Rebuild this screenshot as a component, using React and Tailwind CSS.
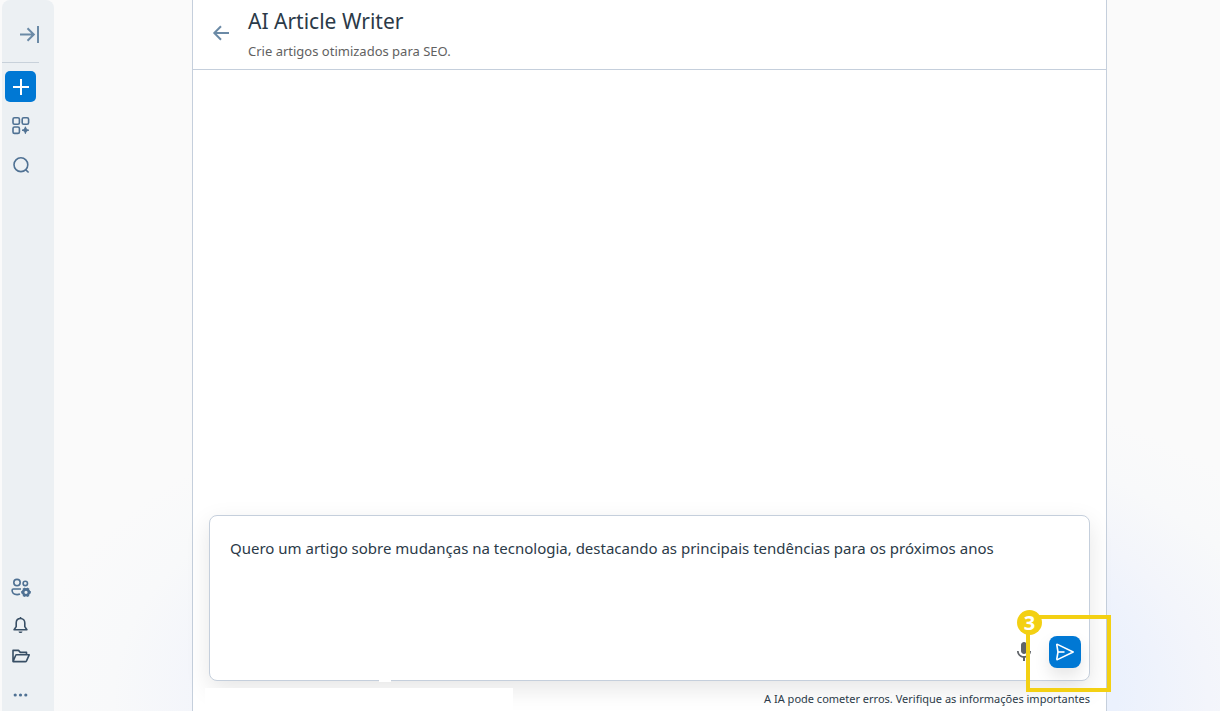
import {MdMic} from 'react-icons/md';

export default function App() {
  return (
    <div className="flex min-h-screen bg-[#fafafa] pl-0.5 font-['Noto_Sans','Open_Sans',sans-serif] text-[#2b3a48]">
      <Sidebar />
      <Backdrop>
        <main className="flex flex-1 flex-col border-x border-[#c5cfdc] bg-white">
          <Header />
          <div className="flex-1" />
          <Composer />
        </main>
      </Backdrop>
    </div>
  );
}

function Backdrop({children}) {
  return (
    <div className="flex flex-1 bg-[radial-gradient(ellipse_660px_330px_at_56%_98%,#e9f0fe_0%,#ebf1fd_62%,#f3f5fb_76%,#f8f9fa_90%,#fafafa_104%)] pl-[138px] pr-[113px]">
      {children}
    </div>
  );
}

function Sidebar() {
  return (
    <nav
      aria-label="Menu"
      className="flex w-[52px] flex-col justify-between rounded-t-lg bg-[#ecf0f3] text-[#4f7193]"
    >
      <div className="flex w-[37px] flex-col items-center">
        <div className="flex h-[63px] w-full items-center justify-end border-b border-[#c8d1da] pt-1.5 text-[#6b8aa6]">
          <button type="button" aria-label="Expandir menu">
            <ExpandIcon />
          </button>
        </div>
        <button
          type="button"
          aria-label="Novo"
          className="mt-2 flex size-[31px] items-center justify-center rounded-[5px] bg-[#0078d4] text-white"
        >
          <PlusIcon />
        </button>
        <button type="button" aria-label="Aplicativos" className="mt-3.5">
          <AppsIcon />
        </button>
        <button type="button" aria-label="Buscar" className="mt-5">
          <SearchIcon />
        </button>
      </div>
      <div className="flex w-[37px] flex-col items-center pb-1.5">
        <button type="button" aria-label="Equipe">
          <TeamIcon />
        </button>
        <button type="button" aria-label="Notificações" className="mt-[18px] text-[#384f65]">
          <BellIcon />
        </button>
        <button type="button" aria-label="Arquivos" className="mt-[15px] text-[#384f65]">
          <FolderIcon />
        </button>
        <button type="button" aria-label="Mais" className="mt-[22px]">
          <DotsIcon />
        </button>
      </div>
    </nav>
  );
}

function Header() {
  return (
    <header className="flex h-[70px] items-start gap-[18px] border-b border-[#c5cfdc] pl-[19px]">
      <a href="#voltar" aria-label="Voltar" className="mt-6 text-[#6b8aa6]">
        <BackIcon />
      </a>
      <div className="pt-[7px]">
        <h1 className="text-[21px] leading-7">AI Article Writer</h1>
        <p className="mt-1.5 text-[13px] leading-5 text-[#616161]">Crie artigos otimizados para SEO.</p>
      </div>
    </header>
  );
}

function Composer() {
  return (
    <form className="px-4">
      <div className="relative flex h-[166px] flex-col rounded-lg border border-[#c5cfdc] bg-white shadow-[0_8px_24px_rgba(0,0,0,0.1)]">
        <textarea
          aria-label="Mensagem"
          className="flex-1 resize-none overflow-hidden px-5 pt-5 text-[15px] leading-6 outline-none"
          defaultValue="Quero um artigo sobre mudanças na tecnologia, destacando as principais tendências para os próximos anos"
        />
        <div className="flex items-center justify-end gap-[13px] pb-3 pr-2">
          <button type="button" aria-label="Ditar" className="text-[#5f6368]">
            <MdMic size={24} />
          </button>
          <div className="relative">
            <button
              type="submit"
              aria-label="Enviar"
              className="flex size-8 items-center justify-center rounded-lg bg-[#0078d4] text-white shadow-[0_8px_16px_rgba(0,0,0,0.1)]"
            >
              <SendIcon />
            </button>
            <StepMarker number={3} />
          </div>
        </div>
        <span className="absolute -bottom-0.5 left-[169px] h-[3px] w-3 bg-white" />
      </div>
      <div className="relative mt-1.5 flex items-stretch justify-between">
        <span className="-ml-1 mt-px w-[308px] bg-white" />
        <p className="pb-0.5 pt-0.5 text-[11px] leading-5">
          A IA pode cometer erros. Verifique as informações importantes
        </p>
      </div>
    </form>
  );
}

function StepMarker({number}) {
  return (
    <div className="pointer-events-none absolute -left-[23px] -top-[21px] z-10 h-[77px] w-[85px] border-4 border-[#f3d013]">
      <span className="absolute -left-[13px] -top-[9px] flex size-[25px] items-center justify-center rounded-full bg-[#f3d013] font-['Open_Sans',sans-serif] text-xl font-bold leading-none text-white">
        {number}
      </span>
    </div>
  );
}

function ExpandIcon() {
  return (
    <svg width="20" height="18" viewBox="0 0 20 18" fill="none" stroke="currentColor" strokeWidth="2">
      <path d="M1 9.5h14M8.5 3.3 14.8 9.5l-6.3 6.2M19 1v17" />
    </svg>
  );
}

function BackIcon() {
  return (
    <svg width="18" height="18" viewBox="0 0 18 18" fill="none" stroke="currentColor" strokeWidth="2">
      <path d="M17 9H2.5M9 2.2 2.3 9 9 15.8" />
    </svg>
  );
}

function PlusIcon() {
  return (
    <svg width="17" height="17" viewBox="0 0 17 17" fill="none" stroke="currentColor" strokeWidth="2">
      <path d="M9 1v16M1 9h16" />
    </svg>
  );
}

function AppsIcon() {
  return (
    <svg width="20" height="19" viewBox="0 0 20 19" fill="none" stroke="currentColor" strokeWidth="1.6">
      <rect x="2" y="1.8" width="6.4" height="6.4" rx="1.5" />
      <rect x="11.2" y="1.8" width="6.4" height="6.4" rx="1.5" />
      <rect x="2" y="11" width="6.4" height="6.4" rx="1.5" />
      <path
        d="M14.4 10.8c.6 2.2 1.2 2.8 3.4 3.4-2.2.6-2.8 1.2-3.4 3.4-.6-2.2-1.2-2.8-3.4-3.4 2.2-.6 2.8-1.2 3.4-3.4z"
        fill="currentColor"
        strokeWidth="1"
      />
    </svg>
  );
}

function SearchIcon() {
  return (
    <svg width="18" height="20" viewBox="0 0 18 20" fill="none" stroke="currentColor" strokeWidth="1.6">
      <circle cx="8.9" cy="9.7" r="6.9" />
      <path d="m13.6 14.7 3 2.8" />
    </svg>
  );
}

function TeamIcon() {
  return (
    <svg width="20" height="20" viewBox="0 0 20 20" fill="none" stroke="currentColor" strokeWidth="1.6">
      <circle cx="6" cy="4.6" r="3.2" />
      <circle cx="14.3" cy="5.4" r="2.2" />
      <path d="M10 11H2.4c-.8 0-1.3.5-1.3 1.3 0 2.6 2.1 4.3 5 4.3 1 0 2-.1 2.9-.5" />
      <circle cx="15" cy="14.3" r="2.9" strokeWidth="2.6" />
      <path
        d="M12.6 10.1l1 1.8M16.400 16.700l1 1.800M17.400 10.100l-1 1.800M13.600 16.700l-1 1.800M10.200 14.300h2M17.800 14.300h2"
        strokeWidth="2.400"
      />
    </svg>
  );
}

function BellIcon() {
  return (
    <svg width="18" height="18" viewBox="0 0 18 18" fill="none" stroke="currentColor" strokeWidth="1.6">
      <path
        d="M8.500 2.500c-2.700 0-4.300 2-4.300 4.500v3.600L2.100 13.800h12.800l-2.100-3.200V7c0-2.500-1.600-4.500-4.300-4.500zM8.500 1v1.500"
        strokeLinejoin="round"
      />
      <path d="M6.500 15.500h4c-.3 1-1 1.600-2 1.600s-1.700-.6-2-1.600z" fill="currentColor" stroke="none" />
    </svg>
  );
}

function FolderIcon() {
  return (
    <svg width="18" height="14" viewBox="0 0 18 14" fill="none" stroke="currentColor" strokeWidth="1.6" strokeLinejoin="round">
      <path d="M1 12.6V1.400h5.500l1.800 2h6.200v2.400M1 12.600l2.600-6.100c.2-.5.500-.7 1-.7h12.600l-2.700 6c-.3.600-.6.800-1.200.8H1z" />
    </svg>
  );
}

function DotsIcon() {
  return (
    <svg width="16" height="20" viewBox="0 0 16 20" fill="currentColor">
      <circle cx="2.2" cy="10" r="1.600" />
      <circle cx="7.500" cy="10" r="1.600" />
      <circle cx="12.800" cy="10" r="1.600" />
    </svg>
  );
}

function SendIcon() {
  return (
    <svg width="20" height="18" viewBox="0 0 20 18" fill="none" stroke="currentColor" strokeWidth="1.600" strokeLinejoin="round">
      <path d="M1.800 1.800c-.1-.4.200-.6.600-.4L18.200 9 2.400 16.600c-.4.200-.7 0-.6-.4L3 9 1.800 1.800z" />
      <path d="M3 9h6.500" />
    </svg>
  );
}
